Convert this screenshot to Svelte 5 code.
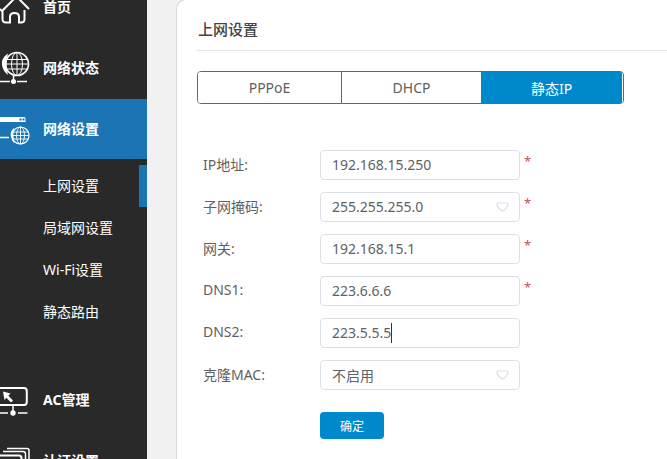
<script>
  const fields = [
    { label: 'IP地址:', value: '192.168.15.250', required: true },
    { label: '子网掩码:', value: '255.255.255.0', required: true, select: true },
    { label: '网关:', value: '192.168.15.1', required: true },
    { label: 'DNS1:', value: '223.6.6.6', required: true },
    { label: 'DNS2:', value: '223.5.5.5', caret: true },
    { label: '克隆MAC:', value: '不启用', select: true }
  ];
  const subs = ['上网设置', '局域网设置', 'Wi-Fi设置', '静态路由'];
</script>

<div class="page">
  <aside class="side">
    <a class="item">
      <svg viewBox="0 -23 43 60" class="ic" fill="none" stroke="#fff" stroke-width="2">
        <path d="M0 9 L2 11 L14 -1 M14 -1 L17 -3 L29 9 M2.500 10 V19 Q2.500 22.500 6 22.500 H10 V17 Q10 13 14.500 13 Q19 13 19 17 V22.500 H21 Q24.500 22.500 24.500 19 V10" />
      </svg>
      <span>首页</span>
    </a>
    <a class="item">
      <svg viewBox="0 38 43 60" class="ic" fill="none" stroke="#fff">
        <circle cx="17" cy="64" r="11.500" stroke-width="1.600" />
        <ellipse cx="17" cy="64" rx="5.500" ry="11.500" />
        <path d="M17 52.500 V75.500 M6.500 59.500 H27.500 M6 64 H28 M6.500 69 H27.500" />
        <path d="M8 53.500 Q1 58 2 65 Q3 71 8 75 Q5 64 8 53.500 Z" fill="#fff" stroke="none" />
        <path d="M13.500 76 V81" stroke-width="1.500" />
        <circle cx="13.500" cy="81.500" r="2.500" fill="#fff" stroke="none" />
        <path d="M0 81.500 H10 M17 81.500 H27" stroke-width="1.600" />
      </svg>
      <span>网络状态</span>
    </a>
    <a class="item active">
      <svg viewBox="0 99 43 60" class="ic" fill="none" stroke="#fff">
        <path d="M0 117 H24 Q25.500 117 25.500 118.500 V122 H0 Z" fill="#fff" stroke="none" />
        <rect x="19.500" y="118.500" width="2" height="2" fill="#1b75b5" stroke="none" />
        <rect x="22.500" y="118.500" width="2" height="2" fill="#1b75b5" stroke="none" />
        <path d="M0 137.500 H9" stroke-width="1.500" />
        <circle cx="20.500" cy="135.500" r="8.500" stroke-width="1.200" />
        <ellipse cx="20.500" cy="135.500" rx="4" ry="8.500" stroke-width=".9" />
        <path d="M20.500 127 V144 M12.500 132 H28.500 M12 135.500 H29 M12.500 139 H28.500" stroke-width=".9" />
        <path d="M14 128 Q10 131 10.800 136 Q11.500 141 14.500 143.500 Q12.500 135 14 128 Z" fill="#fff" stroke="none" />
      </svg>
      <span>网络设置</span>
    </a>
    <div class="subs">
      {#each subs as s, i}
        <a class="sub" class:on={i === 0}><span>{s}</span></a>
      {/each}
    </div>
    <a class="item ac">
      <svg viewBox="0 370 43 60" class="ic" fill="none" stroke="#fff">
        <path d="M0 388 H24 Q26.800 388 26.800 391 V402 Q26.800 405 24 405 H0" stroke-width="2" />
        <path d="M3 391.500 L10.500 393.500 L8.300 395.800 L13 400.500 L11 402.500 L6.300 397.800 L4.500 400 Z" fill="#fff" stroke="none" />
        <path d="M13 405 V412" stroke-width="1.500" />
        <circle cx="13" cy="413" r="2.700" fill="#fff" stroke="none" />
        <path d="M0 413 H8 M18 413 H27.500" stroke-width="1.500" />
      </svg>
      <span>AC管理</span>
    </a>
    <a class="item">
      <svg viewBox="0 431 43 60" class="ic" fill="none" stroke="#fff">
        <path d="M7 448.500 H27 Q29 448.500 29 450.500 V460" stroke-width="1.500" />
        <path d="M3 451.500 H23 Q25.500 451.500 25.500 454 V460" stroke-width="1.500" />
        <path d="M0 455.500 H19 Q21.500 455.500 21.500 458 V462" stroke-width="2" />
      </svg>
      <span>认证设置</span>
    </a>
  </aside>

  <main class="main">
    <section class="card">
      <h2 class="title">上网设置</h2>
      <div class="tabs">
        <button class="tab t1">PPPoE</button>
        <button class="tab t2">DHCP</button>
        <button class="tab t3 sel">静态IP</button>
      </div>
      <form class="form">
        {#each fields as f}
          <div class="row">
            <span class="lab">{f.label}</span>
            <div class="box">
              <span class="val">{f.value}{#if f.caret}<i class="caret"></i>{/if}</span>
              {#if f.select}
                <svg class="arrow" viewBox="0 0 13 10" fill="none" stroke="#dcdfe6" stroke-width="1.200">
                  <path d="M2.500 1 H10.500 Q12.300 1 12 3 Q11 6.500 6.500 9 Q2 6.500 1 3 Q.700 1 2.500 1 Z" />
                </svg>
              {/if}
            </div>
            {#if f.required}<span class="req">*</span>{/if}
          </div>
        {/each}
        <button type="button" class="ok">确定</button>
      </form>
    </section>
  </main>
</div>

<style>
  :global(body) { margin: 0; }
  .page {
    display: flex;
    width: 667px;
    height: 459px;
    overflow: hidden;
    background: #f1f1f1;
    font-family: "Noto Sans", "Noto Sans CJK SC", sans-serif;
  }
  .side {
    flex: none;
    width: 147px;
    height: 459px;
    background: #292929;
    display: flex;
    flex-direction: column;
    color: #fff;
  }
  .item {
    flex: none;
    height: 60px;
    margin-bottom: 1px;
    display: flex;
    align-items: center;
    font-size: 14px;
    font-weight: 700;
  }
  .item span, .sub span { margin-top: -2px; }
  .item:first-child { margin-top: -23px; }
  .item.active { background: #1b75b5; margin-bottom: 0; }
  .item.ac { margin-top: 37px; }
  .ic {
    flex: none;
    width: 43px;
    height: 60px;
    overflow: hidden;
  }
  .subs { margin-top: 6px; }
  .sub {
    display: flex;
    align-items: center;
    height: 42px;
    padding-left: 43px;
    font-size: 14px;
    box-sizing: border-box;
  }
  .sub.on { border-right: 8px solid #1b75b5; }
  .main {
    flex: 1;
    min-width: 0;
    padding-left: 29px;
  }
  .card {
    background: #fff;
    border-left: 1px solid #d9d9d9;
    border-top: 1px solid #d9d9d9;
    border-top-left-radius: 10px;
    margin-top: -1px;
    height: 470px;
    padding-left: 20px;
    box-sizing: border-box;
  }
  .title {
    margin: 0;
    box-sizing: border-box;
    border-bottom: 1px solid #e4e4e4;
    font-size: 15px;
    font-weight: 500;
    line-height: 59px;
    color: #444;
    padding-left: 1px;
    height: 51px;
  }
  .tabs {
    display: flex;
    width: 427px;
    height: 33px;
    margin-top: 20px;
    border: 1px solid #1b7db5;
    border-radius: 4px;
    box-sizing: border-box;
    overflow: hidden;
  }
  .tab {
    border: 0;
    padding: 0;
    background: #fff;
    color: #606060;
    font: inherit;
    font-size: 14px;
  }
  .t1 { width: 144px; border-right: 1px solid #1b7db5; }
  .t2 { width: 139px; }
  .t3 { flex: 1; }
  .sel { background: #0088cc; color: #fff; border-right: 1px solid #fff; }
  .form {
    margin-top: 46px;
    padding-left: 6px;
    display: flex;
    flex-direction: column;
    gap: 12px;
  }
  .row {
    display: flex;
    align-items: center;
    height: 30px;
  }
  .lab {
    width: 117px;
    font-size: 14px;
    color: #5f5f5f;
    margin-top: -3px;
  }
  .box {
    width: 200px;
    height: 30px;
    box-sizing: border-box;
    border: 1px solid #dcdfe6;
    border-radius: 4px;
    padding: 0 11px;
    display: flex;
    align-items: center;
    justify-content: space-between;
    font-size: 14px;
    color: #606266;
  }
  .val { margin-top: -1px; }
  .caret {
    display: inline-block;
    width: 1px;
    height: 20px;
    background: #333;
    vertical-align: -5px;
  }
  .arrow { width: 13px; height: 10px; margin-right: -1px; }
  .req {
    margin-left: 4px;
    margin-top: -8px;
    color: #c0506a;
    font-size: 13px;
  }
  .ok {
    width: 64px;
    height: 27px;
    margin: 10px 0 0 117px;
    border: 0;
    border-radius: 4px;
    background: #0088cc;
    color: #fff;
    font: inherit;
    font-size: 12px;
    padding: 0;
  }
</style>
